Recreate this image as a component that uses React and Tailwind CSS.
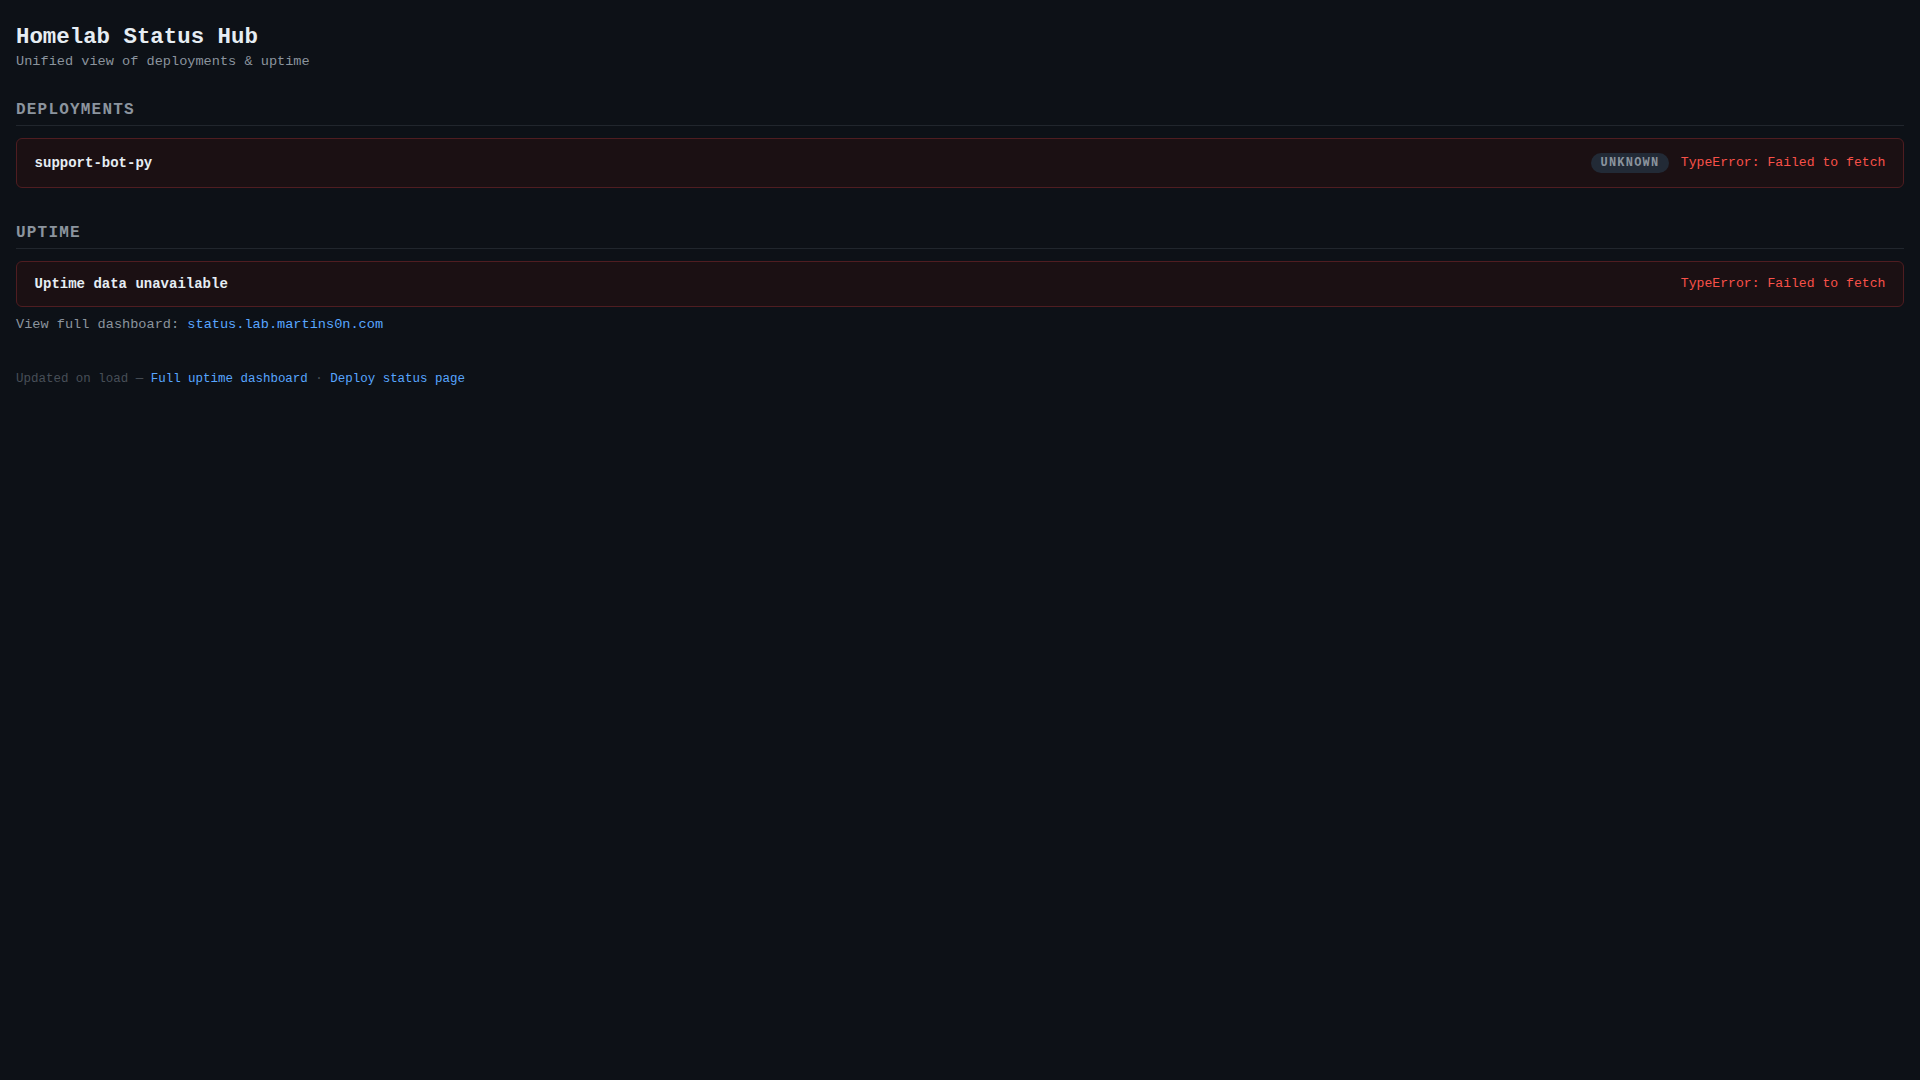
export default function App() {
  return (
    <div className="min-h-screen bg-[#0d1117] font-['Liberation_Mono',monospace] px-4 pt-6">
      <h1 className="text-[22.4px] leading-[1.2] font-bold text-[#e6edf3]">Homelab Status Hub</h1>
      <p className="mt-[1px] text-[13.6px] leading-[1.5] text-[#8b949e]">Unified view of deployments &amp; uptime</p>

      <section className="mt-[29px]">
        <h2 className="text-[16px] leading-[18px] font-bold tracking-[1.2px] text-[#8b949e] pb-[6px] border-b border-[#21262d]">
          DEPLOYMENTS
        </h2>
        <div className="mt-3 flex items-center justify-between rounded-md border border-[#4f1d21] bg-[#1b1013] px-[17.6px] py-[14px]">
          <span className="text-[14px] leading-[16px] font-bold text-[#e6edf3]">support-bot-py</span>
          <div className="flex items-center gap-3">
            <span className="rounded-full bg-[#222a36] px-[9.5px] py-[3px] text-[12px] leading-[14px] font-bold tracking-[0.1em] text-[#8b949e]">
              UNKNOWN
            </span>
            <span className="text-[13.12px] leading-[16px] text-[#f85149]">TypeError: Failed to fetch</span>
          </div>
        </div>
      </section>

      <section className="mt-[36px]">
        <h2 className="text-[16px] leading-[18px] font-bold tracking-[1.2px] text-[#8b949e] pb-[6px] border-b border-[#21262d]">
          UPTIME
        </h2>
        <div className="mt-3 flex items-center justify-between rounded-md border border-[#4f1d21] bg-[#1b1013] px-[17.6px] py-[13.6px]">
          <span className="text-[14px] leading-[16.3px] font-bold text-[#e6edf3]">Uptime data unavailable</span>
          <span className="text-[13.12px] leading-[16px] text-[#f85149]">TypeError: Failed to fetch</span>
        </div>
        <p className="mt-[8.5px] text-[13.6px] leading-[1.5] text-[#8b949e]">
          View full dashboard: <a className="text-[#58a6ff]">status.lab.martins0n.com</a>
        </p>
      </section>

      <p className="mt-[34.5px] text-[12.48px] leading-[1.5] text-[#484f58]">
        Updated on load — <a className="text-[#58a6ff]">Full uptime dashboard</a> · <a className="text-[#58a6ff]">Deploy status page</a>
      </p>
    </div>
  );
}
